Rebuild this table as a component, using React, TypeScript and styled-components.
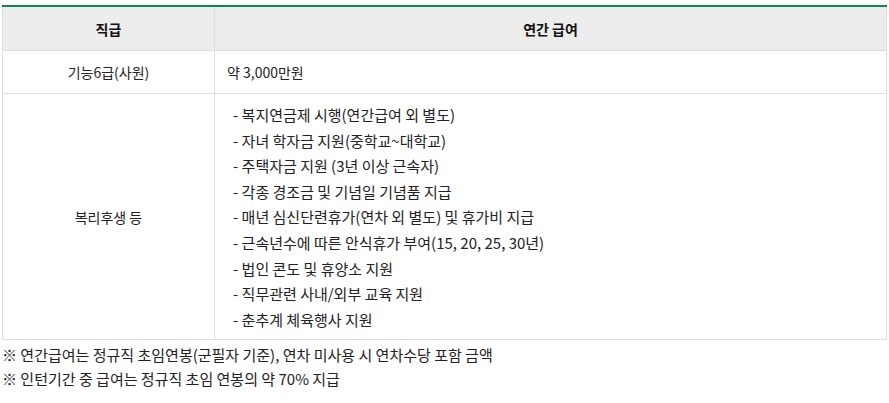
import React from "react";
import styled, { createGlobalStyle } from "styled-components";

const Global = createGlobalStyle`
  html, body { margin: 0; padding: 0; background: #fff; }
  body { font-family: "Noto Sans CJK KR", "Noto Sans", sans-serif; color: #222; }
`;

const Wrap = styled.div`
  padding: 5px 3px 0 2px;
  width: 885px;
`;

const Table = styled.table`
  width: 885px;
  border-collapse: collapse;
  border-top: 2px solid #0a8a4a;
  font-size: 14px;
  table-layout: fixed;
`;

const Th = styled.th<{ $w?: number }>`
  background: #ededed;
  height: 43px;
  padding: 0;
  font-weight: 700;
  font-size: 14px;
  color: #111;
  text-align: center;
  border: 1px solid #dcdde3;
  border-top: none;
  ${(p) => (p.$w ? `width: ${p.$w}px;` : "")}
`;

const Td = styled.td<{ $align?: "left" | "center" }>`
  border: 1px solid #dcdde3;
  padding: 0 12px;
  height: 42px;
  text-align: ${(p) => p.$align ?? "left"};
  vertical-align: middle;
  line-height: 20px;
  color: #222;
`;

const List = styled.ul`
  list-style: none;
  margin: 0;
  padding: 8px 0 7px 6px;
  font-size: 15px;
`;

const Item = styled.li`
  line-height: 25.6px;
  &::before { content: "- "; }
`;

const Notes = styled.div`
  padding-top: 3px;
  font-size: 15px;
  line-height: 24px;
  color: #222;
`;

const items = [
  "복지연금제 시행(연간급여 외 별도)",
  "자녀 학자금 지원(중학교~대학교)",
  "주택자금 지원 (3년 이상 근속자)",
  "각종 경조금 및 기념일 기념품 지급",
  "매년 심신단련휴가(연차 외 별도) 및 휴가비 지급",
  "근속년수에 따른 안식휴가 부여(15, 20, 25, 30년)",
  "법인 콘도 및 휴양소 지원",
  "직무관련 사내/외부 교육 지원",
  "춘추계 체육행사 지원",
];

export default function App() {
  return (
    <Wrap>
      <Global />
      <Table>
        <thead>
          <tr>
            <Th $w={211}>직급</Th>
            <Th>연간 급여</Th>
          </tr>
        </thead>
        <tbody>
          <tr>
            <Td $align="center">기능6급(사원)</Td>
            <Td>약 3,000만원</Td>
          </tr>
          <tr>
            <Td $align="center">복리후생 등</Td>
            <Td>
              <List>
                {items.map((t) => (
                  <Item key={t}>{t}</Item>
                ))}
              </List>
            </Td>
          </tr>
        </tbody>
      </Table>
      <Notes>
        <div>※ 연간급여는 정규직 초임연봉(군필자 기준), 연차 미사용 시 연차수당 포함 금액</div>
        <div>※ 인턴기간 중 급여는 정규직 초임 연봉의 약 70% 지급</div>
      </Notes>
    </Wrap>
  );
}
